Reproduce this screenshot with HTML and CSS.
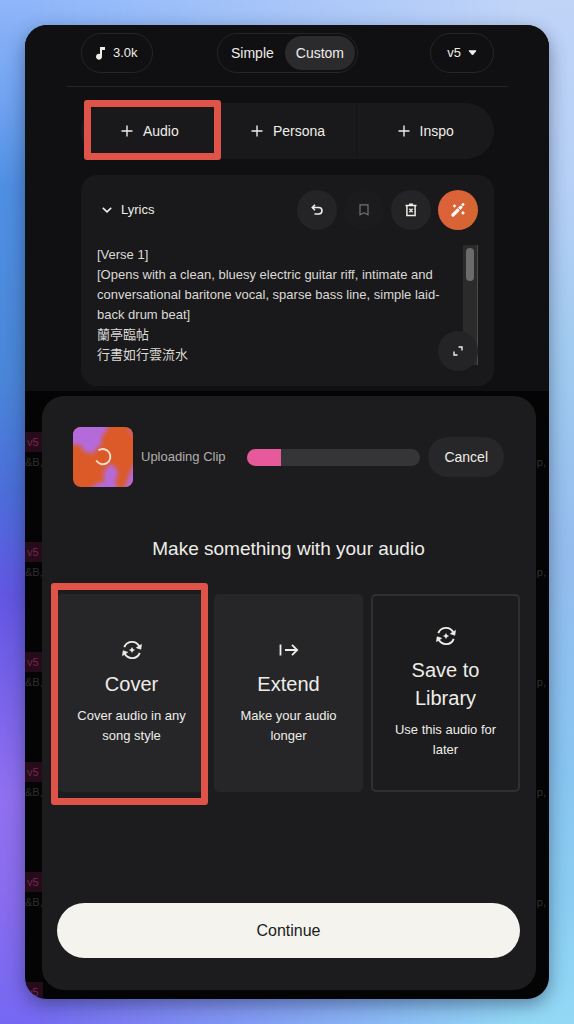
FILE: index.html
```html
<!DOCTYPE html>
<html lang="en">
<head>
<meta charset="utf-8">
<meta name="viewport" content="width=device-width, initial-scale=1">
<title>Create</title>
<link rel="stylesheet" href="styles.css">
</head>
<body>
<svg class="defs" aria-hidden="true">
  <symbol id="plus" viewBox="0 0 12 12"><path d="M6 0.5v11M0.5 6h11" fill="none" stroke="currentColor" stroke-width="1.4"/></symbol>
  <symbol id="remix" viewBox="0 0 20 20">
    <path d="M2.300 7.200A8.200 8.200 0 0 1 17.200 6.200M17.700 12.800A8.200 8.200 0 0 1 2.800 13.800" fill="none" stroke="currentColor" stroke-width="1.900"/>
    <path d="M19.400 4.500l-.6 4.700-4.400-1.500zM.6 15.500l.6-4.700 4.400 1.500z" fill="currentColor" stroke="currentColor" stroke-width=".8" stroke-linejoin="round"/>
    <path d="M10 6.900q.6 2.500 3.100 3.100-2.500.6-3.100 3.100-.6-2.500-3.100-3.100 2.500-.6 3.100-3.100z" fill="currentColor"/>
  </symbol>
</svg>
<div class="window">
  <section class="create">
    <header class="topbar">
      <button class="pill" type="button">
        <svg width="10" height="14" viewBox="0 0 10 14"><path d="M4 1h5v3H6v6.500a3 3 0 1 1-2-2.600z" fill="currentColor"/></svg>
        3.0k
      </button>
      <div class="modes">
        <button class="mode" type="button">Simple</button>
        <button class="mode mode-active" type="button" aria-pressed="true">Custom</button>
      </div>
      <button class="pill pill-end" type="button">
        v5
        <svg width="9" height="6" viewBox="0 0 9 6"><path d="M1 .8h7L4.500 5z" fill="currentColor" stroke="currentColor" stroke-linejoin="round"/></svg>
      </button>
    </header>
    <div class="sources">
      <button class="source marked" type="button"><svg width="12" height="12"><use href="#plus"/></svg>Audio</button>
      <button class="source" type="button"><svg width="12" height="12"><use href="#plus"/></svg>Persona</button>
      <button class="source" type="button"><svg width="12" height="12"><use href="#plus"/></svg>Inspo</button>
    </div>
    <div class="lyrics">
      <div class="lyrics-head">
        <svg width="10" height="6" viewBox="0 0 10 6"><path d="M.8.8L5 4.800 9.200.8" fill="none" stroke="currentColor" stroke-width="1.6"/></svg>
        <label class="lyrics-label" for="lyrics">Lyrics</label>
        <button class="round" type="button" aria-label="Undo"><svg width="12" height="12" viewBox="0 0 12 12"><path d="M4 .8L1.300 3.500 4 6.200M1.500 3.500h6.200a3 3 0 0 1 0 6.500H3.500" fill="none" stroke="currentColor" stroke-width="1.600"/></svg></button>
        <button class="round round-off" type="button" aria-label="Save lyrics"><svg width="10" height="12" viewBox="0 0 10 12"><path d="M1 .8h8v10L5 8.800l-4 2z" fill="none" stroke="currentColor" stroke-width="1.200"/></svg></button>
        <button class="round" type="button" aria-label="Clear lyrics"><svg width="12" height="14" viewBox="0 0 12 14"><path d="M.5 2.500h11M4 1.300h4M1.900 2.500v10h8.200v-10M4.300 5.700l3.400 3.600M7.700 5.700L4.300 9.300" fill="none" stroke="currentColor" stroke-width="1.500"/></svg></button>
        <button class="round round-magic" type="button" aria-label="Write lyrics"><svg width="14" height="14" viewBox="0 0 14 14"><path d="M2 12L7 7M8.800 5.200l1.100-1.100" fill="none" stroke="currentColor" stroke-width="3.200" stroke-linecap="round"/><path d="M7 5l2 2" stroke="#d9663a" stroke-width=".9"/><path d="M3.500 1.400l1.500 1.500-1.500 1.500L2 2.900zM12 0l1.500 1.500L12 3l-1.500-1.500zM12 8.300l1.600 1.600-1.600 1.600-1.600-1.600z" fill="currentColor" stroke="currentColor" stroke-width=".5"/></svg></button>
      </div>
      <div class="editor">
        <textarea class="editor-text" id="lyrics" spellcheck="false">[Verse 1]
[Opens with a clean, bluesy electric guitar riff, intimate and conversational baritone vocal, sparse bass line, simple laid-back drum beat]
蘭亭臨帖
行書如行雲流水</textarea>
        <div class="scroll"><div class="scroll-thumb"></div></div>
        <button class="round expand" type="button" aria-label="Expand"><svg width="10" height="10" viewBox="0 0 10 10"><path d="M5.500 1H9v3.500M1 5.500V9h3.500" fill="none" stroke="currentColor" stroke-width="1.400"/></svg></button>
      </div>
    </div>
  </section>

  <section class="stage">
    <ul class="tracks" aria-hidden="true">
      <li class="track"><span class="badge">v5</span><span class="tags"><span>&amp;B,</span><span>p,</span></span></li>
      <li class="track"><span class="badge">v5</span><span class="tags"><span>&amp;B,</span><span>p,</span></span></li>
      <li class="track"><span class="badge">v5</span><span class="tags"><span>&amp;B,</span><span>p,</span></span></li>
      <li class="track"><span class="badge">v5</span><span class="tags"><span>&amp;B,</span><span>p,</span></span></li>
      <li class="track"><span class="badge">v5</span><span class="tags"><span>&amp;B,</span><span>p,</span></span></li>
      <li class="track"><span class="badge">v5</span></li>
    </ul>
    <div class="dialog" role="dialog" aria-labelledby="dialog-title">
      <div class="upload">
        <svg class="cover-art" viewBox="0 0 60 60" role="img" aria-label="Clip artwork">
          <defs>
            <filter id="soft" x="-20%" y="-20%" width="140%" height="140%"><feGaussianBlur stdDeviation="2"/></filter>
            <clipPath id="art"><rect width="60" height="60" rx="8"/></clipPath>
          </defs>
          <g clip-path="url(#art)">
            <rect width="60" height="60" fill="#db5a27"/>
            <g fill="#b56bdc" filter="url(#soft)">
              <path d="M-5-5H38L33 4 28 11 29 17 24 21 20 27 10 24 8 18-5 17z"/>
              <path d="M34 40L38 37 44 42 45 48 42 54 46 65H14L23 57 32 54 30 47z"/>
              <path d="M59 40l6-6v31H50z"/>
              <path d="M53 4l9-5v10z" opacity=".5"/>
            </g>
            <path d="M25.500 23.400A7.600 7.600 0 1 1 23.200 33.400" fill="none" stroke="#f5dfd0" stroke-width="1.900"/>
          </g>
        </svg>
        <label class="upload-label" for="upload">Uploading Clip</label>
        <progress class="upload-bar" id="upload" max="100" value="20"></progress>
        <button class="cancel" type="button">Cancel</button>
      </div>
      <h1 class="dialog-title" id="dialog-title">Make something with your audio</h1>
      <div class="options">
        <button class="option marked marked-option" type="button">
          <svg width="20" height="20"><use href="#remix"/></svg>
          <span class="option-name">Cover</span>
          <span class="option-text">Cover audio in any song style</span>
        </button>
        <button class="option" type="button">
          <svg width="20" height="20" viewBox="0 0 20 20"><path d="M1.500 4.500v11M6 10h12M13 4.800L18.200 10 13 15.200" fill="none" stroke="currentColor" stroke-width="1.800"/></svg>
          <span class="option-name">Extend</span>
          <span class="option-text">Make your audio longer</span>
        </button>
        <button class="option option-outline" type="button">
          <svg width="20" height="20"><use href="#remix"/></svg>
          <span class="option-name">Save to Library</span>
          <span class="option-text">Use this audio for later</span>
        </button>
      </div>
      <button class="continue" type="button">Continue</button>
    </div>
  </section>
</div>
</body>
</html>
```
FILE: styles.css
```css
* { box-sizing: border-box; }

body {
  margin: 0;
  min-height: 100vh;
  display: flex;
  padding: 25px;
  position: relative;
  isolation: isolate;
  font-family: "Liberation Sans", "Noto Sans CJK TC", Arial, sans-serif;
  font-size: 14px;
  line-height: 20px;
  color: #efede8;
  background: linear-gradient(#c0d4f8, #b6d0f6 18%, #9fcaf0 36%, #94bdee 54%, #88c5f0 75%, #8bcdf2 88%, #93d9f6);
}

body::before {
  content: "";
  position: absolute;
  inset: 0;
  z-index: -1;
  background: linear-gradient(#8fb6f9, #6fa2f0 10%, #4f8fe2 18%, #4a86d8 37%, #4b6ed8 48%, #6156e2 58%, #9170f0 78%, #8a6cec 87%, #7468f2);
  -webkit-mask-image: linear-gradient(to right, #000 5%, transparent 90%);
  mask-image: linear-gradient(to right, #000 5%, transparent 90%);
}

button {
  margin: 0;
  padding: 0;
  border: 0;
  font: inherit;
  color: inherit;
  background: none;
  cursor: pointer;
}

svg { display: block; flex: none; }
.defs { position: absolute; width: 0; height: 0; }

.window {
  flex: 1;
  min-width: 0;
  display: flex;
  flex-direction: column;
  overflow: hidden;
  border-radius: 22px;
  background: #040404;
  box-shadow: 0 6px 18px rgba(20, 30, 60, .45);
}

/* Create panel */
.create { padding: 0 41px 5px 42px; background: #101012; }

.topbar {
  display: grid;
  grid-template-columns: 1fr auto 1fr;
  align-items: center;
  padding: 8px 14px 13px;
  border-bottom: 1px solid #252527;
}

.pill {
  display: flex;
  align-items: center;
  justify-self: start;
  gap: 7px;
  height: 40px;
  padding: 0 14px;
  border: 1px solid #252527;
  border-radius: 20px;
  font-size: 13px;
}
.pill-end { justify-self: end; padding: 0 16px; }

.modes {
  display: flex;
  height: 40px;
  padding: 2px;
  border: 1px solid #252527;
  border-radius: 20px;
}

.mode { padding: 0 11px; border-radius: 18px; }
.mode-active { background: #2b2b2d; }

.sources {
  display: grid;
  grid-template-columns: repeat(3, 1fr);
  height: 56px;
  margin: 16px 14px;
  border-radius: 28px;
  background: #19191b;
}

.source {
  display: flex;
  align-items: center;
  justify-content: center;
  gap: 10px;
}
.source + .source { border-left: 1px solid #141416; }

/* Red frame around a highlighted control */
.marked { position: relative; }
.marked::after {
  content: "";
  position: absolute;
  inset: -3px -2px -1px 3px;
  border: 7px solid #df5348;
  border-radius: 3px;
}
.marked-option::after { inset: -11px -2px -13px -6px; }

.lyrics {
  margin: 0 14px;
  padding: 15px 16px 21px;
  border-radius: 16px;
  font-size: 13px;
  background: #19191b;
}

.lyrics-head { display: flex; align-items: center; gap: 7px; padding-left: 5px; }
.lyrics-label { flex: 1; padding-left: 2px; }

.round {
  display: grid;
  place-items: center;
  width: 40px;
  height: 40px;
  border-radius: 50%;
  background: #242426;
}
.round-off { color: #747475; background: #1b1b1d; }
.round-magic { color: #fff; background: linear-gradient(110deg, #e0603c, #d1672f); }

.editor { position: relative; display: flex; margin-top: 15px; }

.editor-text {
  flex: 1;
  min-width: 0;
  height: 120px;
  padding: 0 12px 0 0;
  border: 0;
  outline: 0;
  resize: none;
  overflow: hidden;
  font: inherit;
  color: #dcdad5;
  background: none;
}

.scroll { width: 15px; padding: 3px; border-right: 1px solid #4a4a4b; background: #2b2b2b; }
.scroll-thumb { height: 33px; border-radius: 4px; background: #6b6b6b; }
.expand { position: absolute; right: 0; bottom: -6px; }

/* Dimmed track list with the dialog over it */
.stage { flex: 1; display: grid; }
.tracks, .dialog { grid-area: 1 / 1; min-width: 0; }

.tracks {
  height: 0;
  min-height: 100%;
  margin: 0;
  padding: 41px 0 0;
  overflow: hidden;
  list-style: none;
  font-size: 11px;
}
.track { height: 110px; }
.badge {
  display: block;
  width: 18px;
  padding-left: 2px;
  color: #74284f;
  background: #260b1a;
}
.tags { display: flex; justify-content: space-between; padding-right: 3px; color: #2f2f2f; }

.dialog {
  display: flex;
  flex-direction: column;
  margin: 5px 13px 9px 17px;
  padding: 31px 16px 32px 15px;
  border-radius: 22px;
  background: #1c1c1e;
}

.upload { display: flex; align-items: center; gap: 8px; padding: 0 16px; }
.cover-art { width: 60px; height: 60px; }
.upload-label { font-size: 13px; color: #b0afac; white-space: nowrap; }

.upload-bar {
  flex: 1;
  min-width: 0;
  height: 17px;
  margin-left: 13px;
  border: 0;
  border-radius: 9px;
  overflow: hidden;
  appearance: none;
  -webkit-appearance: none;
  background: #353537;
}
.upload-bar::-webkit-progress-bar { background: #353537; }
.upload-bar::-webkit-progress-value { background: #e65a9c; }

.cancel { height: 40px; padding: 0 16px; border-radius: 20px; background: #272729; }

.dialog-title {
  margin: 48px 0 31px;
  font-size: 19px;
  line-height: 28px;
  font-weight: 400;
  text-align: center;
}

.options { display: grid; grid-template-columns: repeat(3, 1fr); gap: 8px; }

.option {
  display: flex;
  flex-direction: column;
  align-items: center;
  justify-content: center;
  min-height: 198px;
  padding: 16px;
  border-radius: 5px;
  background: #262628;
}
.option-outline { border: 2px solid #303032; background: none; padding: 14px; }
.option-name { margin: 10px 0 8px; font-size: 20px; line-height: 28px; }
.option-text { font-size: 13px; }

.continue {
  height: 55px;
  margin-top: auto;
  border-radius: 28px;
  font-size: 16px;
  color: #1b1b1c;
  background: #f4f3ed;
}
```
